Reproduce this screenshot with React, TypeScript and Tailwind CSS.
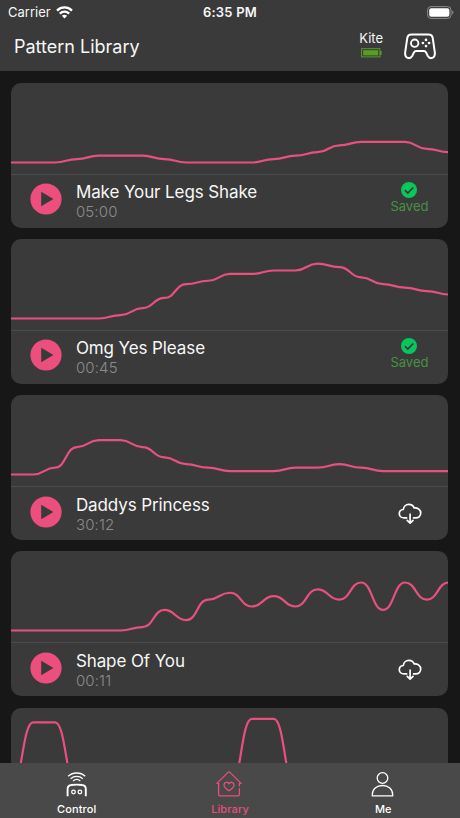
import React from "react";

type Pattern = {
  title?: string;
  time?: string;
  saved?: boolean;
  levels: number[];
};

const patterns: Pattern[] = [
  {
    title: "Make Your Legs Shake",
    time: "05:00",
    saved: true,
    levels: [0, 0, 0, 1, 2, 2, 2, 1, 0, 0, 0, 0, 1, 2, 3, 5, 6, 6, 6, 4, 3],
  },
  {
    title: "Omg Yes Please",
    time: "00:45",
    saved: true,
    levels: [0, 0, 0, 0, 0, 1, 3, 6, 10, 11, 13, 13, 14, 14, 16, 15, 12, 10, 9, 8, 7],
  },
  {
    title: "Daddys Princess",
    time: "30:12",
    saved: false,
    levels: [0, 0, 2, 8, 10, 10, 8, 5, 3, 2, 1, 1, 1, 2, 2, 3, 2, 1, 1, 1, 1],
  },
  {
    title: "Shape Of You",
    time: "00:11",
    saved: false,
    levels: [0, 0, 0, 0, 0, 0, 1, 6, 3, 9, 11, 7, 10, 7, 12, 9, 14, 6, 14, 9, 14],
  },
  {
    levels: [0, 19, 19, 0, 0, 0, 0, 0, 0, 0, 0, 20, 20, 0, 0, 0, 0, 0, 0, 0, 0],
  },
];

const STEP_X = 21.87;
const STEP_Y = 3.43;
const BASE_Y = 79.5;

function curvePath(levels: number[]): string {
  const pts = levels.map((v, i) => [i * STEP_X + 0.3, BASE_Y - v * STEP_Y]);
  return pts.reduce((d, [x, y], i) => {
    if (i === 0) return `M0 ${y}H${x}`;
    const [px, py] = pts[i - 1];
    const mid = (px + x) / 2;
    return `${d}C${mid} ${py} ${mid} ${y} ${x} ${y}`;
  }, "");
}

function StatusBar() {
  return (
    <div className="grid h-6 grid-cols-3 items-center pl-2 pr-[6px]">
      <div className="flex items-center gap-[5px]">
        <span className="text-[13px] leading-none">Carrier</span>
        <svg width="17" height="13" viewBox="0 0 17 13" fill="none" stroke="white" strokeWidth="2.3">
          <path d="M1 4.6C5.2 .4 11.8 .4 16 4.6" />
          <path d="M3.8 7.6c2.7-2.6 6.7-2.6 9.4 0" />
          <path d="M8.5 12.4 5.9 9.8c1.5-1.4 3.7-1.4 5.2 0z" fill="white" stroke="none" />
        </svg>
      </div>
      <span className="pr-[2px] text-center text-[13px] font-semibold leading-none tracking-[0.2px]">6:35 PM</span>
      <svg className="justify-self-end" width="27" height="13" viewBox="0 0 27 13" fill="none">
        <rect x=".6" y=".6" width="23.4" height="11.8" rx="3.4" stroke="#8b8b8b" strokeWidth="1" />
        <rect x="2.2" y="2.2" width="20.2" height="8.6" rx="2" fill="white" />
        <path d="M25.2 4.5c1.7.5 1.7 3.5 0 4z" fill="#8b8b8b" />
      </svg>
    </div>
  );
}

function Gamepad() {
  return (
    <svg width="32" height="27" viewBox="0 0 32 27" fill="none" stroke="white" strokeWidth="2" strokeLinejoin="round">
      <path d="M7.4 1.6h17.2c2.2 0 3.7 1.2 4.1 3.3l2.1 14.3c.8 6.4-4.8 7.4-7 3.8l-1.5-3.2c-.6-1.3-1.2-1.8-2.5-1.8h-7.6c-1.3 0-1.9.5-2.5 1.8L8.2 23c-2.2 3.6-7.8 2.6-7-3.8L3.3 4.9c.4-2.1 1.9-3.3 4.1-3.3z" />
      <circle cx="10.7" cy="10.2" r="3.7" strokeWidth="1.9" />
      <g fill="white" stroke="none">
        <circle cx="22" cy="6.9" r="1.35" />
        <circle cx="22" cy="13.1" r="1.35" />
        <circle cx="18.9" cy="10" r="1.35" />
        <circle cx="25.1" cy="10" r="1.35" />
      </g>
    </svg>
  );
}

function Header() {
  return (
    <header className="h-[71px] shrink-0 bg-[#3a3a3a]">
      <StatusBar />
      <div className="flex h-[46px] items-center pl-[14px] pr-6">
        <h1 className="flex-1 text-[18px] leading-none">Pattern Library</h1>
        <div className="mr-[21px] mt-[-6px] flex flex-col items-center gap-[3px]">
          <span className="text-[13px] leading-[14px]">Kite</span>
          <svg width="21" height="10" viewBox="0 0 21 10" fill="none">
            <rect x=".6" y=".7" width="18.3" height="8.2" stroke="#599d25" strokeWidth="1" />
            <rect x="2.2" y="2.2" width="15" height="5.2" fill="#599d25" />
            <rect x="19" y="3" width="1.5" height="4" fill="#599d25" />
          </svg>
        </div>
        <div className="mt-[-2px]">
          <Gamepad />
        </div>
      </div>
    </header>
  );
}

function SavedBadge() {
  return (
    <div className="flex w-10 flex-col items-center">
      <svg width="16" height="16" viewBox="0 0 16 16">
        <circle cx="8" cy="8" r="8" fill="#08c55c" />
        <path d="m4 8.2 2.8 2.8 5.5-5.5" fill="none" stroke="#333c36" strokeWidth="1.7" />
      </svg>
      <span className="mt-[1px] text-[13px] leading-[15px] text-[#479044]">Saved</span>
    </div>
  );
}

function CloudDownload() {
  return (
    <svg
      width="24"
      height="22"
      viewBox="0 0 24 22"
      fill="none"
      stroke="white"
      strokeWidth="1.7"
      strokeLinecap="round"
      strokeLinejoin="round"
    >
      <path d="M8.6 14.9H6.1C3.2 14.9 1.3 13 1.3 10.7c0-2.2 1.6-4 4-4.2C5.6 3.5 8 1.4 10.8 1.4c2.5 0 4.5 1.3 5.4 3.5 3.6-.3 6.5 2 6.5 5.1 0 2.9-2.1 4.9-5 4.9h-2.1" />
      <path d="M12.1 11.2v8.6M9.2 17.4l2.9 2.8 2.9-2.8" />
    </svg>
  );
}

function PatternCard({ pattern }: { pattern: Pattern }) {
  return (
    <article className="h-[145px] shrink-0 overflow-hidden rounded-[10px] bg-[#3a3a3a]">
      <svg className="block" width="438" height="91" viewBox="0 0 438 91" fill="none">
        <path d={curvePath(pattern.levels)} stroke="#e8507e" strokeWidth="2.2" />
      </svg>
      {pattern.title && (
        <div className="flex h-[54px] items-center border-t border-[#4b4b4d] pl-[18.5px] pr-[19px]">
          <svg className="mt-[-4px]" width="32" height="32" viewBox="0 0 32 32">
            <circle cx="16" cy="16" r="15.6" fill="#ec4f7d" />
            <path d="M11.2 8.8v14.4L23.4 16z" fill="#3a3a3a" />
          </svg>
          <div className="ml-[14px] mt-[1px] flex-1">
            <h2 className="text-[17px] leading-[21px] tracking-[-0.1px]">{pattern.title}</h2>
            <p className="text-[15px] font-light leading-[18px] tracking-[0.15px] text-[#8c8c8c]">{pattern.time}</p>
          </div>
          {pattern.saved ? (
            <div className="mt-[-6px]">
              <SavedBadge />
            </div>
          ) : (
            <div className="mr-[7px]">
              <CloudDownload />
            </div>
          )}
        </div>
      )}
    </article>
  );
}

function ControlIcon() {
  return (
    <svg width="28" height="28" viewBox="0 0 28 28" fill="none" stroke="white">
      <path d="M5.2 6.3c4.7-4.4 12.3-4.4 17 0M7.6 8.7c3.5-3 8.7-3 12.2 0M10.1 10.9c2.1-1.7 5.1-1.7 7.2 0" strokeWidth="1.3" />
      <path d="M4.6 26.3V19c0-2.4 1.5-3.8 3.8-4 3.5-.5 7.1-.5 10.6 0 2.3.2 3.8 1.6 3.8 4v7.3" strokeWidth="1.9" />
      <circle cx="10.5" cy="22" r="1.8" strokeWidth="1.3" />
      <circle cx="16.9" cy="22" r="1.8" strokeWidth="1.3" />
    </svg>
  );
}

function LibraryIcon() {
  return (
    <svg width="28" height="28" viewBox="0 0 28 28" fill="none" stroke="#e54f7c" strokeWidth="1.3" strokeLinecap="round" strokeLinejoin="round">
      <path d="M2.6 24V13.4H.9L12 2.4c.7-.6 1.3-.6 2 0l11 11h-1.6v2.4M23.4 18.6V24c0 1.3-.6 1.9-1.9 1.9h-17c-1.3 0-1.9-.6-1.9-1.9" />
      <path d="M13 20.8c-2.7-1.8-5-3.7-5-5.9 0-2.9 3.7-3.6 5-1 1.3-2.6 5-1.9 5 1 0 2.2-2.3 4.1-5 5.9z" />
    </svg>
  );
}

function MeIcon() {
  return (
    <svg width="28" height="28" viewBox="0 0 28 28" fill="none" stroke="white" strokeWidth="1.3" strokeLinejoin="round">
      <circle cx="13.5" cy="8" r="5.3" />
      <path d="M3.3 25.9v-1.2c0-5.5 4.3-9.2 10.2-9.2s10.2 3.7 10.2 9.2v1.2z" />
    </svg>
  );
}

const tabs = [
  { label: "Control", icon: <ControlIcon />, color: "text-white" },
  { label: "Library", icon: <LibraryIcon />, color: "text-[#e54f7c]" },
  { label: "Me", icon: <MeIcon />, color: "text-white" },
];

export default function App() {
  return (
    <div className="flex h-[818px] w-[460px] flex-col overflow-hidden bg-[#171717] font-['Inter','Liberation_Sans',sans-serif] text-[#f7f7f7]">
      <Header />
      <main className="flex min-h-0 flex-1 flex-col gap-[11.25px] overflow-hidden pl-[11.4px] pr-[11.6px] pt-[11.5px]">
        {patterns.map((p, i) => (
          <PatternCard key={i} pattern={p} />
        ))}
      </main>
      <nav className="grid h-[55px] shrink-0 grid-cols-3 bg-[#494949]">
        {tabs.map((t) => (
          <button key={t.label} className={`flex flex-col items-center pt-[7px] ${t.color}`}>
            {t.icon}
            <span className="mt-1 text-[11px] font-medium leading-[14px] tracking-[0.1px]">{t.label}</span>
          </button>
        ))}
      </nav>
    </div>
  );
}
